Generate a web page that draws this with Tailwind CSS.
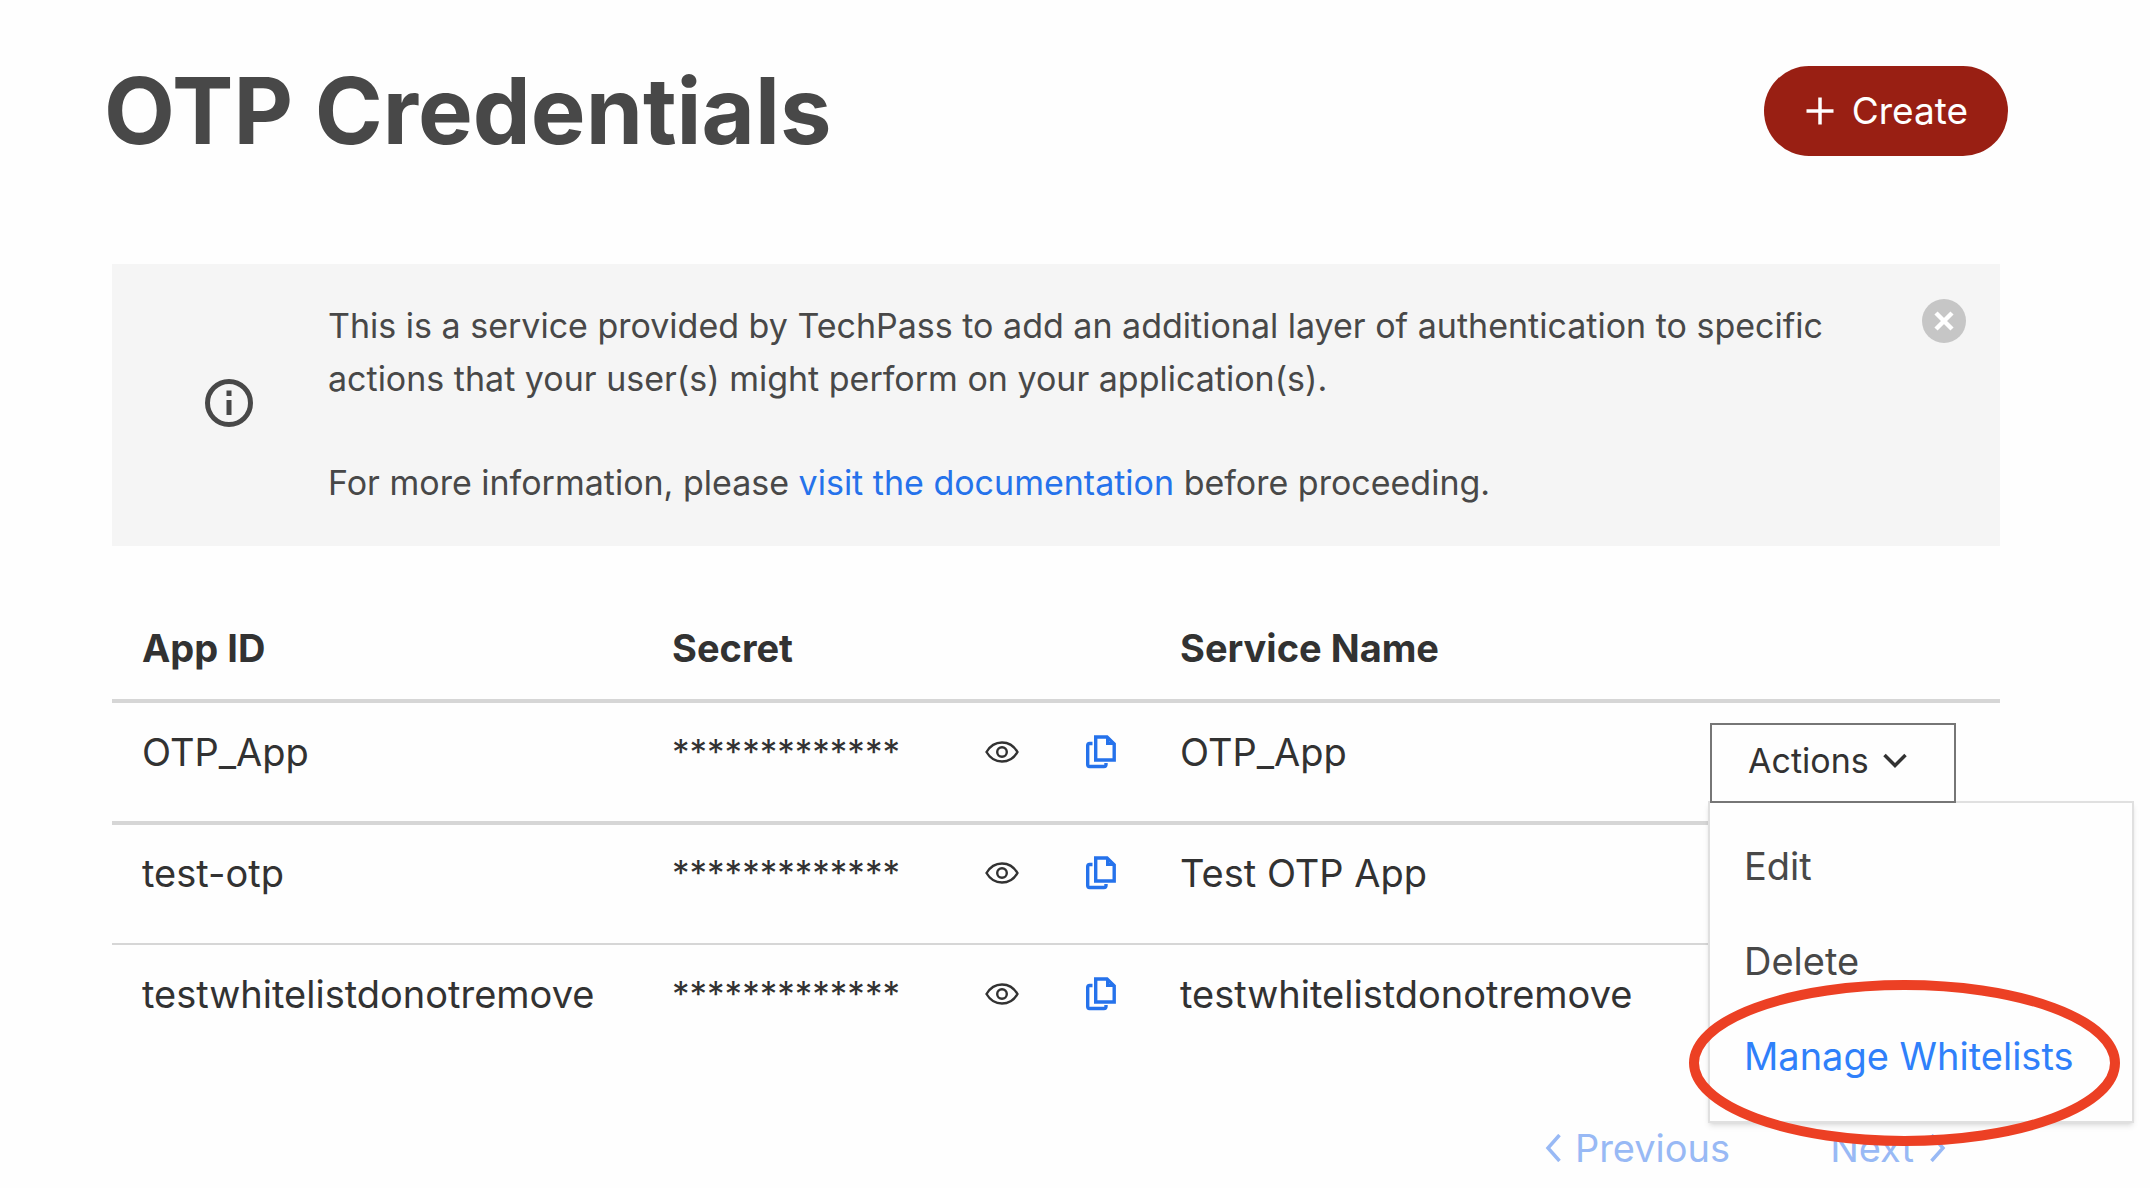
<!DOCTYPE html>
<html lang="en">
<head>
<meta charset="utf-8">
<title>OTP Credentials</title>
<script src="https://cdn.jsdelivr.net/npm/@tailwindcss/browser@4"></script>
</head>
<body class="min-h-screen bg-[#fefefe] font-['Inter',sans-serif] text-[#323232] overflow-x-hidden">
<svg class="hidden" aria-hidden="true">
  <symbol id="eye" viewBox="0 0 34 22"><g fill="none" stroke="currentColor" stroke-width="2.400"><path d="M1.500 11C5 5 11 1.500 17 1.500S29 5 32.500 11C29 17 23 20.500 17 20.500S5 17 1.500 11Z"/><circle cx="17" cy="11" r="4.800"/></g></symbol>
  <symbol id="copy" viewBox="0 0 30 34"><g fill="none" stroke="currentColor" stroke-width="3.400"><path d="M9.700 2H21L28.200 9V25H9.700Z"/><path d="M21.500 2V8.500H28" stroke-width="3"/><path d="M6.500 8.500H3.500Q1.700 8.500 1.700 10.500V29.500Q1.700 31.500 3.500 31.500H18Q20 31.500 20 29.500V28"/></g></symbol>
</svg>
<main class="pl-28 pr-[150px] pt-[66px]">
  <header class="-ml-2 -mr-2 flex items-start justify-between">
    <h1 class="text-[92px] leading-[90px] font-bold text-[#484848]">OTP Credentials</h1>
    <button type="button" class="flex h-[90px] items-center gap-[18px] rounded-full bg-[#991f13] pl-[42px] pr-10 text-[37px] leading-[48px] text-white">
      <svg class="size-7" viewBox="0 0 28 28" aria-hidden="true"><path d="M14 0.500V27.500M0.500 14H27.500" stroke="currentColor" stroke-width="3.500"/></svg>
      Create
    </button>
  </header>

  <section class="mt-[108px] flex items-start bg-[#f5f5f5] pb-[37px] pt-[35px] pl-[92px] pr-[34px] text-[34px] leading-[53px] text-[#484848]">
    <svg class="mr-[74px] size-[50px] shrink-0 self-center" viewBox="0 0 50 50" aria-hidden="true"><circle cx="25" cy="24" r="21.500" fill="none" stroke="currentColor" stroke-width="5"/><path d="M25 11.500V17M25 21V36" stroke="currentColor" stroke-width="5"/></svg>
    <div class="grow">
      <p>This is a service provided by TechPass to add an additional layer of authentication to specific<br>actions that your user(s) might perform on your application(s).</p>
      <p class="mt-[51px]">For more information, please <a href="#" class="text-[#2572eb]">visit the documentation</a> before proceeding.</p>
    </div>
    <button type="button" aria-label="Close" class="shrink-0"><svg class="size-11" viewBox="0 0 44 44" aria-hidden="true"><circle cx="22" cy="22" r="22" fill="#c6c6c6"/><path d="M14 14L30 30M30 14L14 30" stroke="#fff" stroke-width="4.500"/></svg></button>
  </section>

  <table class="mt-[60px] w-full table-fixed border-separate border-spacing-0 text-left text-[38px] leading-[48px]">
    <colgroup><col class="w-[530px]"><col class="w-[300px]"><col class="w-[120px]"><col class="w-[88px]"><col><col class="w-[290px]"></colgroup>
    <thead>
      <tr class="[&>*]:h-[97px] [&>*]:border-b-4 [&>*]:border-[#d6d6d6] [&>*]:pt-[18px] [&>*]:align-top [&>*]:font-bold">
        <th class="pl-[30px]">App ID</th><th class="pl-[30px]" colspan="3">Secret</th><th class="pl-[30px]">Service Name</th><td></td>
      </tr>
    </thead>
    <tbody class="[&>tr>td]:align-top">
      <tr class="[&>td]:h-[122px] [&>td]:border-b-4 [&>td]:border-[#d6d6d6] [&>td]:pt-[25px]">
        <td class="pl-[30px]">OTP_App</td><td class="pl-[30px] text-[35px]">*************</td>
        <td class="pl-[43px]"><button type="button" aria-label="Show secret" class="flex h-12 items-center"><svg class="h-[22px] w-[34px]"><use href="#eye"/></svg></button></td>
        <td class="pl-6"><button type="button" aria-label="Copy secret" class="flex h-12 items-center text-[#2572eb]"><svg class="h-[34px] w-[30px]"><use href="#copy"/></svg></button></td>
        <td class="pl-[30px]">OTP_App</td>
        <td class="relative">
          <div class="absolute left-0 top-5 z-10">
            <button type="button" aria-expanded="true" class="relative z-10 flex h-20 w-[246px] items-center gap-3.5 border-2 border-[#767676] bg-[#fefefe] pb-1 pl-9 text-[34px] leading-[48px]">Actions
              <svg class="h-4 w-6" viewBox="0 0 24 16" aria-hidden="true"><path d="M1.500 2L12 12.500L22.500 2" fill="none" stroke="currentColor" stroke-width="3.500"/></svg>
            </button>
            <div class="absolute -left-0.5 top-[78px] w-[426px] border-2 border-[#e0e0e0] bg-[#fefefe] pb-[17px] pt-4 text-[38px] leading-[95px] text-[#484848] shadow-md">
              <a href="#" class="block pl-[34px]">Edit</a>
              <a href="#" class="block pl-[34px]">Delete</a>
              <a href="#" class="block whitespace-nowrap pl-[34px] text-[#2f80fa]">Manage Whitelists</a>
              <svg class="absolute left-[-21px] top-[177px] h-[166px] w-[431px]" viewBox="0 0 431 166" aria-hidden="true"><ellipse cx="215.500" cy="83" rx="210.500" ry="78" fill="none" stroke="#ec4024" stroke-width="10"/></svg>
            </div>
          </div>
        </td>
      </tr>
      <tr class="[&>td]:h-[120px] [&>td]:border-b-2 [&>td]:border-[#d6d6d6] [&>td]:pt-6">
        <td class="pl-[30px]">test-otp</td><td class="pl-[30px] text-[35px]">*************</td>
        <td class="pl-[43px]"><button type="button" aria-label="Show secret" class="flex h-12 items-center"><svg class="h-[22px] w-[34px]"><use href="#eye"/></svg></button></td>
        <td class="pl-6"><button type="button" aria-label="Copy secret" class="flex h-12 items-center text-[#2572eb]"><svg class="h-[34px] w-[30px]"><use href="#copy"/></svg></button></td>
        <td class="pl-[30px]">Test OTP App</td><td></td>
      </tr>
      <tr class="[&>td]:h-[120px] [&>td]:pt-[25px]">
        <td class="pl-[30px]">testwhitelistdonotremove</td><td class="pl-[30px] text-[35px]">*************</td>
        <td class="pl-[43px]"><button type="button" aria-label="Show secret" class="flex h-12 items-center"><svg class="h-[22px] w-[34px]"><use href="#eye"/></svg></button></td>
        <td class="pl-6"><button type="button" aria-label="Copy secret" class="flex h-12 items-center text-[#2572eb]"><svg class="h-[34px] w-[30px]"><use href="#copy"/></svg></button></td>
        <td class="pl-[30px]">testwhitelistdonotremove</td><td></td>
      </tr>
    </tbody>
  </table>

  <nav aria-label="Pagination" class="mt-[59px] flex h-16 items-start justify-end gap-[100px] pr-[54px] text-[38px] leading-[48px] text-[#98b9f5]">
    <button type="button" class="flex items-center gap-3.5"><svg class="h-7 w-4" viewBox="0 0 16 28" aria-hidden="true"><path d="M14.500 1L3 14L14.500 27" fill="none" stroke="currentColor" stroke-width="3.500"/></svg>Previous</button>
    <button type="button" class="flex items-center gap-4">Next<svg class="h-7 w-4" viewBox="0 0 16 28" aria-hidden="true"><path d="M1.500 1L13 14L1.500 27" fill="none" stroke="currentColor" stroke-width="3.500"/></svg></button>
  </nav>
</main>
</body>
</html>
